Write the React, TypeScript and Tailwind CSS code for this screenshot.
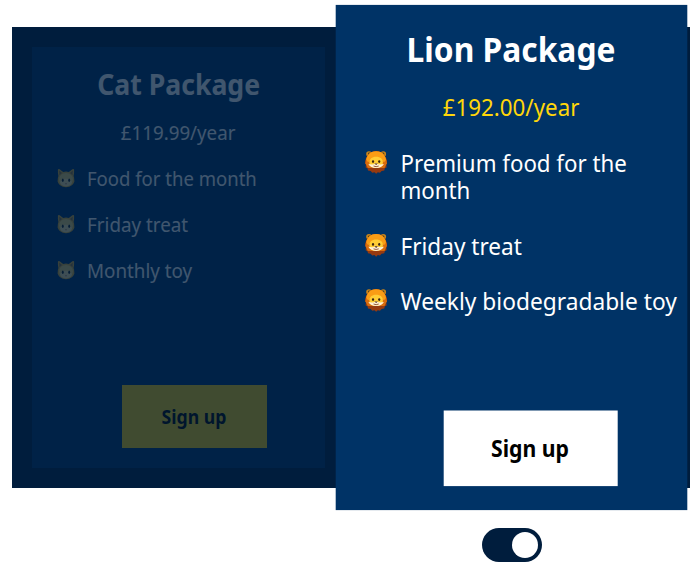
import React from "react";

type Line = { text: string; fit: string };

type Plan = {
  name: Line;
  price: Line;
  features: Line[];
};

const cat: Plan = {
  name: { text: "Cat Package", fit: "scale-x-[0.95]" },
  price: { text: "£119.99/year", fit: "scale-x-[0.985]" },
  features: [
    { text: "Food for the month", fit: "scale-x-[0.975]" },
    { text: "Friday treat", fit: "scale-x-[0.99]" },
    { text: "Monthly toy", fit: "scale-x-[0.99]" },
  ],
};

const lion: Plan = {
  name: { text: "Lion Package", fit: "scale-x-[0.945]" },
  price: { text: "£192.00/year", fit: "scale-x-[0.98]" },
  features: [
    { text: "Premium food for the month", fit: "scale-x-[0.977] w-[200px]" },
    { text: "Friday treat", fit: "scale-x-[0.99]" },
    { text: "Weekly biodegradable toy", fit: "scale-x-[0.997] whitespace-nowrap" },
  ],
};

function CatIcon() {
  return (
    <svg viewBox="0 0 18 20" className="h-5 w-[18px] shrink-0">
      <path d="M.9 1.6 Q1.4.4 2.6 1.2 L6.2 4 Q9 3.2 11.8 4 L15.4 1.2 Q16.6.4 17.1 1.6 Q17.3 5 16.6 8 Q17.4 10 17.4 13.4 Q16.6 15.8 14.8 17.2 Q12.5 19.2 9 19.2 Q5.5 19.2 3.2 17.2 Q1.4 15.8.6 13.4 Q.6 10 1.4 8 Q.7 5 .9 1.6Z" fill="#dcae38" />
      <path d="M2.2 2.6 L5 5 L2.5 7.2Z M15.8 2.6 L13 5 L15.5 7.2Z" fill="#8f7040" />
      <ellipse cx="9" cy="11.4" rx="6.9" ry="6.4" fill="#ecd070" />
      <ellipse cx="9" cy="14.6" rx="5.8" ry="3.8" fill="#f5e09a" />
      <ellipse cx="5.8" cy="12.2" rx=".95" ry="1.8" fill="#1c2422" />
      <ellipse cx="12.2" cy="12.2" rx=".95" ry="1.8" fill="#1c2422" />
      <path d="M7.9 15.4h2.2L9 16.6Z" fill="#8a4a3c" />
    </svg>
  );
}

function LionIcon() {
  return (
    <svg viewBox="0 0 18 20" className="-ml-[1.5px] mr-[-0.5px] h-5 w-[19.4px] shrink-0" preserveAspectRatio="none">
      <circle cx="3.5" cy="3.2" r="2.2" fill="#c9841a" />
      <circle cx="14.5" cy="3.2" r="2.2" fill="#c9841a" />
      <circle cx="3.7" cy="3.2" r="1.1" fill="#4d4a25" />
      <circle cx="14.3" cy="3.2" r="1.1" fill="#4d4a25" />
      <path d="M9 1 C14 1 17.1 5 17.6 10.5 L16.9 12 L17.1 14.4 L15.7 15.2 L15.3 17 L13.2 17.4 L12 18.8 L10.3 18.5 L9 19.8 L7.7 18.5 L6 18.8 L4.8 17.4 L2.7 17 L2.3 15.2 L.9 14.4 L1.1 12 L.4 10.5 C.9 5 4 1 9 1Z" fill="#963a10" />
      <path d="M9 1 C14 1 17 5.4 17.3 11 L15.5 15 L2.5 15 L.7 11 C1 5.4 4 1 9 1Z" fill="#d96d0e" />
      <path d="M9 1 C13.2 1 16 3.8 16.6 8 Q15 12 13 8 L5 8 Q3 12 1.4 8 C2 3.8 4.8 1 9 1Z" fill="#fa9d15" />
      <path d="M9 5.6 C12.4 5.6 14.2 7.6 14.2 10.2 C14.2 13.2 12.4 14.8 9 14.8 C5.6 14.8 3.8 13.2 3.8 10.2 C3.8 7.6 5.6 5.6 9 5.6Z" fill="#ffcd35" />
      <path d="M3 11.6 Q6.5 12.6 9 11 Q11.5 12.6 15 11.6 Q13.4 15 9 15 Q4.6 15 3 11.6Z" fill="#fff1d5" />
      <ellipse cx="6.6" cy="9.6" rx=".85" ry="1.1" fill="#3c2410" />
      <ellipse cx="11.4" cy="9.6" rx=".85" ry="1.1" fill="#3c2410" />
      <path d="M7.7 11.1h2.6L9 12.5Z" fill="#482617" />
      <path d="M7 13.3 Q9 14.3 11 13.3" stroke="#8b4a26" strokeWidth=".7" fill="none" />
    </svg>
  );
}

function PlanCard({ plan, icon, className, priceClass, buttonClass }: {
  plan: Plan;
  icon: React.ReactNode;
  className: string;
  priceClass: string;
  buttonClass: string;
}) {
  return (
    <article className={`flex h-[421px] w-[293px] shrink-0 flex-col bg-[#003366] text-white ${className}`}>
      <h2 className="mt-[19px] flex h-9 items-center justify-center whitespace-nowrap text-[28px] font-bold">
        <span className={`inline-block ${plan.name.fit}`}>{plan.name.text}</span>
      </h2>
      <p className={`mt-5 flex h-[23px] items-center justify-center whitespace-nowrap text-[19px] font-[450] ${priceClass}`}>
        <span className={`inline-block ${plan.price.fit}`}>{plan.price.text}</span>
      </p>
      <ul className="mt-[23px] flex flex-1 flex-col gap-[23px]">
        {plan.features.map((feature) => (
          <li key={feature.text} className="flex items-start pl-[25px]">
            {icon}
            <span className={`ml-3 origin-left text-[19px] font-[450] leading-[23px] ${feature.fit}`}>
              {feature.text}
            </span>
          </li>
        ))}
      </ul>
      <button className={`mb-5 ml-[90px] h-[63px] w-[145px] whitespace-nowrap pr-px pt-0.5 text-[19px] font-bold text-black ${buttonClass}`}>
        <span className="inline-block scale-x-[0.93]">Sign up</span>
      </button>
    </article>
  );
}

export default function App() {
  return (
    <main className="h-[565px] w-[690px] overflow-hidden bg-white pl-3 pt-[27px] font-['Noto_Sans',sans-serif]">
      <section className="flex h-[461px] gap-10 bg-[#001d3d] p-5">
        <PlanCard plan={cat} icon={<CatIcon />} className="opacity-25" priceClass="text-white" buttonClass="bg-[#ffd60a]" />
        <PlanCard plan={lion} icon={<LionIcon />} className="scale-[1.2]" priceClass="text-[#ffd60a]" buttonClass="bg-white" />
      </section>
      <button role="switch" aria-checked="true" aria-label="Yearly billing" className="ml-[470px] mt-10 flex h-[34px] w-[60px] items-center justify-end rounded-full bg-[#001d3d] pr-1">
        <span className="size-[26px] rounded-full bg-white" />
      </button>
    </main>
  );
}
